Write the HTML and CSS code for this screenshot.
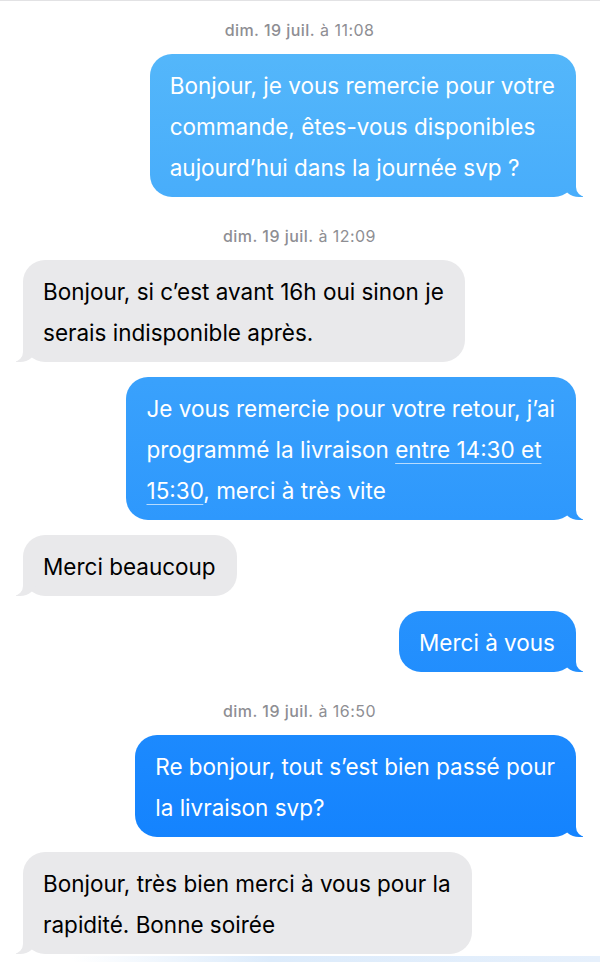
FILE: index.html
```html
<!DOCTYPE html>
<html lang="fr">
<head>
    <meta charset="UTF-8">
    <meta name="viewport" content="width=device-width, initial-scale=1.0">
    <title>Messages</title>
    <link rel="icon" href="data:,">
    <link rel="stylesheet" href="styles.css">
</head>
<body>
    <div class="thread">
        <p class="stamp"><b>dim. 19 juil.</b> à 11:08</p>
        <div class="bubble sent">Bonjour, je vous remercie pour votre<br>commande, êtes-vous disponibles<br>aujourd’hui dans la journée svp ?</div>

        <p class="stamp"><b>dim. 19 juil.</b> à 12:09</p>
        <div class="bubble received">Bonjour, si c’est avant 16h oui sinon je<br>serais indisponible après.</div>
        <div class="bubble sent">Je vous remercie pour votre retour, j’ai<br>programmé la livraison <span class="link">entre 14:30 et<br>15:30</span>, merci à très vite</div>
        <div class="bubble received">Merci beaucoup</div>
        <div class="bubble sent">Merci à vous</div>

        <p class="stamp"><b>dim. 19 juil.</b> à 16:50</p>
        <div class="bubble sent">Re bonjour, tout s’est bien passé pour<br>la livraison svp?</div>
        <div class="bubble received">Bonjour, très bien merci à vous pour la<br>rapidité. Bonne soirée</div>
    </div>
    <div class="strip"></div>
</body>
</html>
```

FILE: styles.css
```css
/* General styles */
body {
    margin: 0;
    padding: 0;
    background-color: #fff;
    border-top: 1px solid #e2e2e4;
    font-family: Inter, "Noto Sans", sans-serif;
    color: #000;
}

/* Conversation */
.thread {
    display: flex;
    flex-direction: column;
    gap: 15px;
    padding: 20px 24px 0 23px;
}

/* Date / time separators */
.stamp {
    margin: 15px 0 0;
    text-align: center;
    font-size: 16px;
    line-height: 18px;
    letter-spacing: 0.45px;
    color: #8e8e93;
}

.stamp:first-child {
    margin-top: 0;
}

.stamp b {
    font-weight: 500;
}

/* Message bubbles */
.bubble {
    position: relative;
    padding: 11px 21px 9px 20px;
    border-radius: 22px;
    font-size: 22.5px;
    line-height: 41px;
    white-space: nowrap;
}

.bubble::before,
.bubble::after {
    content: "";
    position: absolute;
    bottom: 0;
    height: 24px;
}

.sent {
    align-self: flex-end;
    color: #fff;
    background: linear-gradient(#58bafa, #0a7bff) fixed;
}

.sent::before {
    right: -7px;
    width: 20px;
    background: inherit;
    border-bottom-left-radius: 16px 14px;
}

.sent::after {
    right: -26px;
    width: 26px;
    background-color: #fff;
    border-bottom-left-radius: 10px;
}

.received {
    align-self: flex-start;
    background-color: #e9e9eb;
}

.received::before {
    left: -7px;
    width: 20px;
    background-color: #e9e9eb;
    border-bottom-right-radius: 16px 14px;
}

.received::after {
    left: -26px;
    width: 26px;
    background-color: #fff;
    border-bottom-right-radius: 10px;
}

/* Detected date link */
.link {
    text-decoration: underline;
    text-decoration-color: rgba(255, 255, 255, 0.65);
    text-decoration-thickness: 1px;
    text-underline-offset: 5px;
}

/* Reflection at the bottom edge */
.strip {
    height: 8px;
    margin-top: 2px;
    background: linear-gradient(to right, #fff 12%, #dcebfb 45%, #e6f0fc);
}
```
